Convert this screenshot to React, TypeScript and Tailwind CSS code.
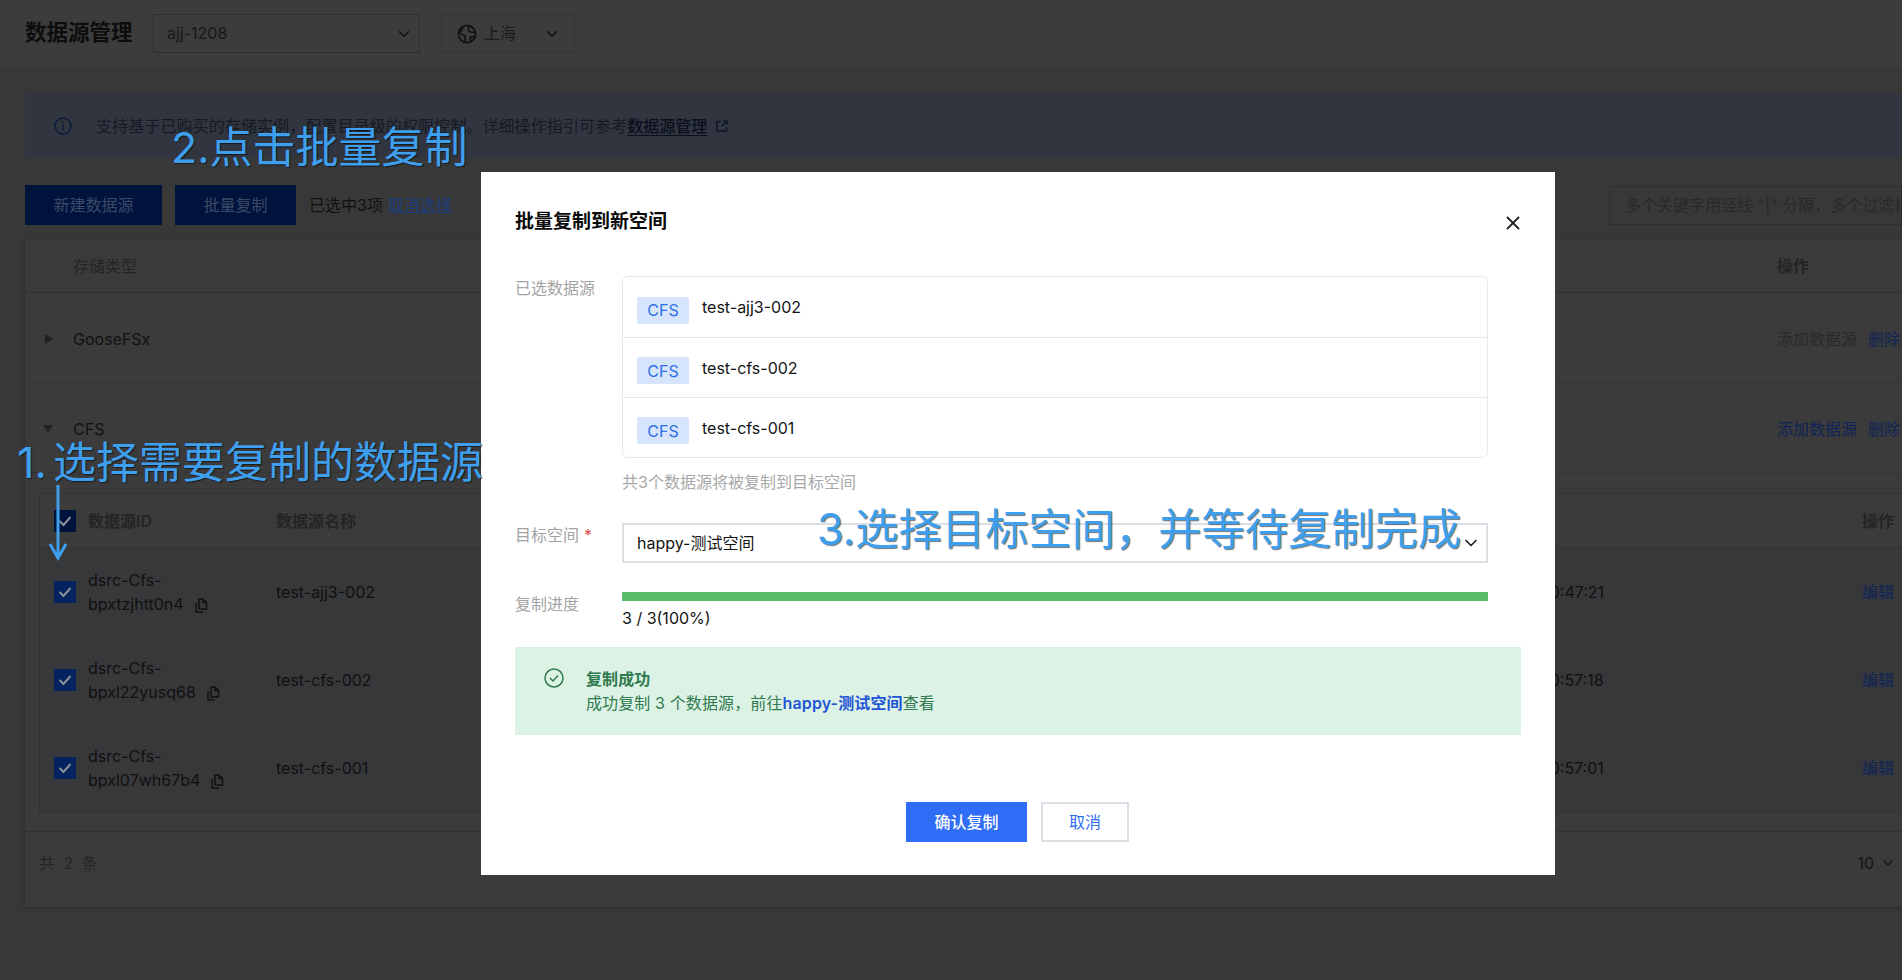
import type { ReactNode } from 'react';
import { ChevronDown, X } from 'lucide-react';

const selectedSources = ['test-ajj3-002', 'test-cfs-002', 'test-cfs-001'];

const sourceRows = [
	{ id: 'dsrc-Cfs-', suffix: 'bpxtzjhtt0n4', name: 'test-ajj3-002', time: '2024-12-08 10:47:21' },
	{ id: 'dsrc-Cfs-', suffix: 'bpxl22yusq68', name: 'test-cfs-002', time: '2024-12-08 10:57:18' },
	{ id: 'dsrc-Cfs-', suffix: 'bpxl07wh67b4', name: 'test-cfs-001', time: '2024-12-08 10:57:01' },
];

function CheckBox({ dark }: { dark?: boolean }) {
	return (
		<span className={`flex h-[22px] w-[22px] shrink-0 items-center justify-center ${dark ? 'bg-[#00133d]' : 'bg-[#05235f]'}`}>
			<svg width="14" height="12" viewBox="0 0 14 12" fill="none" stroke="#8b8f97" strokeWidth="2">
				<path d="M1.5 6 L5.5 10 L12.5 2" />
			</svg>
		</span>
	);
}

function CopyIcon() {
	return (
		<svg width="14" height="15" viewBox="0 0 14 15" fill="none" stroke="#101010" strokeWidth="1.5" className="ml-[10px] inline-block align-[-3px]">
			<path d="M5 1 H9 L12.5 4.5 V11 H5 Z" />
			<path d="M9 1 V4.5 H12.5" />
			<path d="M2 5 V14 H9" />
		</svg>
	);
}

function Annotation({ className, children }: { className: string; children: ReactNode }) {
	return (
		<div className={`absolute whitespace-nowrap font-normal leading-none text-[#3d9fed] [text-shadow:1px_1px_1px_rgba(0,0,0,0.55)] ${className}`}>
			{children}
		</div>
	);
}

function FormLabel({ children }: { children: ReactNode }) {
	return <div className="w-[107px] shrink-0 text-[16px] leading-6 text-[#a3a3a3]">{children}</div>;
}

function CopyModal() {
	return (
		<div className="absolute left-[481px] top-[172px] h-[703px] w-[1074px] bg-white pl-[34px] pr-[34px] pt-[37px]">
			<div className="text-[19px] font-semibold leading-[26px] text-[#0a0a0a]">批量复制到新空间</div>
			<X className="absolute left-[1021px] top-[40px] h-[22px] w-[22px] text-[#222222]" strokeWidth={2} />

			<div className="mt-[41px] flex">
				<FormLabel>已选数据源</FormLabel>
				<div className="w-[866px]">
					<div className="rounded-[6px] border border-[#e8e8ec]">
						{selectedSources.map((name, i) => (
							<div
								key={name}
								className={`flex h-[60px] items-center pl-[14px] ${i > 0 ? 'border-t border-[#e8e8ec]' : ''}`}
							>
								<span className="mt-[6px] flex h-[27px] w-[52px] items-center justify-center rounded-[2px] bg-[#d6e5fb] text-[16px] text-[#2f6fe8]">
									CFS
								</span>
								<span className="ml-[13px] text-[16px] text-[#141414]">{name}</span>
							</div>
						))}
					</div>
					<div className="mt-[12px] text-[16px] leading-6 text-[#a8a8a8]">共3个数据源将被复制到目标空间</div>
				</div>
			</div>

			<div className="mt-[29px] flex">
				<FormLabel>
					目标空间<span className="ml-[5px] text-[#d9534f]">*</span>
				</FormLabel>
				<div className="flex h-[40px] w-[866px] items-center justify-between border-2 border-[#dcdfe5] pl-[13px] pr-[5px] text-[16px] text-[#141414]">
					happy-测试空间
					<ChevronDown className="h-[20px] w-[20px] text-[#222222]" strokeWidth={2} />
				</div>
			</div>

			<div className="mt-[29px] flex">
				<FormLabel>复制进度</FormLabel>
				<div className="w-[866px]">
					<div className="h-[9px] w-full bg-[#5bbd6c]" />
					<div className="mt-[5px] text-[16px] leading-6 text-[#141414]">3 / 3(100%)</div>
				</div>
			</div>

			<div className="mt-[17px] flex h-[88px] bg-[#dcf2e5] pl-[29px] pt-[20px]">
				<svg width="20" height="20" viewBox="0 0 20 20" fill="none" stroke="#2f7a4e" strokeWidth="1.5" className="mt-px shrink-0">
					<circle cx="10" cy="10" r="9" />
					<path d="M6 10 L9 13 L14 7.5" />
				</svg>
				<div className="ml-[22px] text-[16px] leading-6 tracking-[0.12px] text-[#2f7a4e]">
					<div className="font-semibold">复制成功</div>
					<div>
						成功复制 3 个数据源，前往<span className="font-semibold text-[#1f56d6]">happy-测试空间</span>查看
					</div>
				</div>
			</div>

			<div className="mt-[67px] flex justify-center gap-[14px] pr-[1px]">
				<button className="h-[40px] w-[121px] bg-[#2f6df6] text-[16px] font-medium text-white">确认复制</button>
				<button className="h-[40px] w-[88px] border-2 border-[#dcdfe5] bg-white text-[16px] text-[#2f6df6]">取消</button>
			</div>
		</div>
	);
}

export default function App() {
	return (
		<div className="relative h-[980px] w-[1902px] overflow-hidden bg-[#383838] font-[Inter,'Noto_Sans_CJK_SC',sans-serif] text-[16px] text-[#101010]">
			{/* header */}
			<div className="flex h-[67px] items-center bg-[#3c3c3c] pl-[25px]">
				<div className="-mt-[2px] w-[128px] text-[21.5px] font-semibold text-[#0d0d0d]">数据源管理</div>
				<div className="flex h-[39px] w-[267px] items-center justify-between border border-[#2f2f2f] pl-[13px] pr-[6px]">
					<span className="-mt-[2px] text-[#171717]">ajj-1208</span>
					<ChevronDown className="h-[18px] w-[18px] text-[#111111]" strokeWidth={2} />
				</div>
				<div className="ml-[21px] flex h-[39px] w-[134px] items-center border border-[#343434] pl-[15px]">
					<svg width="20" height="20" viewBox="0 0 20 20" fill="none" stroke="#101010" strokeWidth="1.6" className="shrink-0">
						<circle cx="10" cy="10" r="8.6" />
						<path d="M5.5 3 C6 6 4.5 7 2 8 C4 10 5.5 11 8 12 C8.5 14 7.5 16 8 18.5" />
						<path d="M13 2 C11 4 10.5 6 12.5 7.5 C14.5 8.5 16.5 8 18.3 8.5" />
						<path d="M18 13 C15.5 12 13.5 12.5 13 14.5 C13 15.5 13.5 16.5 14 17.2" />
					</svg>
					<span className="-mt-[2px] ml-[7px] text-[#1c1c1c]">上海</span>
					<ChevronDown className="ml-[27px] h-[18px] w-[18px] text-[#111111]" strokeWidth={2} />
				</div>
			</div>

			<div className="pl-[25px] pt-[27px]">
				{/* notice */}
				<div className="flex h-[64px] items-center bg-[#30353f] pl-[29px]">
					<svg width="18" height="18" viewBox="0 0 18 18" fill="none" stroke="#0b1a3c" strokeWidth="1.4" className="shrink-0">
						<circle cx="9" cy="9" r="8" />
						<path d="M9 7.5 V13.5 M9 4.2 V6" />
					</svg>
					<span className="ml-[24px] tracking-[0.1px] text-[#151a24]">支持基于已购买的存储实例，配置目录级的权限控制。详细操作指引可参考</span>
					<span className="font-medium text-[#0a0f1c] underline underline-offset-[3px]">数据源管理</span>
					<svg width="12" height="12" viewBox="0 0 12 12" fill="none" stroke="#0d1526" strokeWidth="1.5" className="ml-[9px]">
						<path d="M5 1.5 H1 V11 H10.5 V7 M6 6 L11 1 M7.5 1 H11 V4.5" />
					</svg>
				</div>

				{/* toolbar */}
				<div className="mt-[27px] flex h-[40px] items-center">
					<button className="h-[40px] w-[137px] bg-[#00133d] text-[#3c4a68]">新建数据源</button>
					<button className="ml-[13px] h-[40px] w-[121px] bg-[#00133d] text-[#3c4a68]">批量复制</button>
					<span className="ml-[13px] text-[#111111]">已选中3项</span>
					<span className="ml-[5px] text-[#1d3f82] underline">取消选择</span>
					<div className="ml-auto flex h-[39px] w-[293px] items-center overflow-hidden whitespace-nowrap border border-[#2f2f2f] pl-[15px] text-[#292929]">
						多个关键字用竖线 "|" 分隔，多个过滤标签用回车键分隔
					</div>
				</div>

				{/* table card */}
				<div className="mt-[14px] h-[668px] bg-[#3b3b3b] shadow-[0_1px_4px_rgba(0,0,0,0.25)]">
					<div className="flex h-[54px] items-center border-b border-[#303030] pl-[48px]">
						<span className="text-[#242424]">存储类型</span>
						<span className="ml-auto w-[125px] font-semibold text-[#242424]">操作</span>
					</div>
					<div className="flex h-[90px] items-center border-b border-[#353535] pl-[20px] pt-[2px]">
						<span className="h-0 w-0 border-y-[5px] border-l-[8px] border-y-transparent border-l-[#222222]" />
						<span className="ml-[20px] text-[#121212]">GooseFSx</span>
						<span className="ml-auto w-[91px] text-[#2a2a2a]">添加数据源</span>
						<span className="w-[34px] text-[#0f2457]">删除</span>
					</div>
					<div className="flex h-[90px] items-center border-b border-[#353535] pl-[18px] pt-[2px]">
						<span className="h-0 w-0 border-x-[5px] border-t-[8px] border-x-transparent border-t-[#222222]" />
						<span className="ml-[20px] text-[#121212]">CFS</span>
						<span className="ml-auto w-[91px] text-[#0f2457]">添加数据源</span>
						<span className="w-[34px] text-[#0f2457]">删除</span>
					</div>

					{/* data sources of CFS */}
					<div className="ml-[14px] mt-[20px] border-b border-l border-t border-[#333333]">
						<div className="flex h-[54px] items-center border-b border-[#323232] pl-[14px]">
							<CheckBox dark />
							<span className="ml-[12px] w-[188px] font-semibold text-[#242424]">数据源ID</span>
							<span className="font-semibold text-[#242424]">数据源名称</span>
							<span className="ml-auto w-[40px] font-semibold text-[#242424]">操作</span>
						</div>
						{sourceRows.map((row) => (
							<div key={row.suffix} className="flex h-[88px] items-center border-b border-[#3a3b3d] bg-[#37383a] pl-[14px] last:border-b-0">
								<CheckBox />
								<div className="ml-[12px] w-[188px] leading-6 text-[#101010]">
									<div>{row.id}</div>
									<div>
										{row.suffix}
										<CopyIcon />
									</div>
								</div>
								<span className="w-[1172px] text-[#101010]">{row.name}</span>
								<span className="whitespace-nowrap text-[#101010]">{row.time}</span>
								<span className="ml-auto w-[40px] text-[#0f2457]">编辑</span>
							</div>
						))}
					</div>

					<div className="mt-[18px] flex h-[76px] items-center border-t border-[#323232] pb-[13px] pl-[14px] pr-[6px]">
						<span className="tracking-[2px] text-[#262626]">共 2 条</span>
						<span className="ml-auto text-[#141414]">10</span>
						<ChevronDown className="ml-[6px] h-[16px] w-[16px] text-[#141414]" strokeWidth={2} />
					</div>
				</div>
			</div>

			<CopyModal />

			{/* tutorial overlays */}
			<Annotation className="left-[171px] top-[126px] text-[43px]">2.点击批量复制</Annotation>
			<Annotation className="left-[17px] top-[441px] text-[43px]">
				<span className="mr-[6px]">1.</span>选择需要复制的数据源
			</Annotation>
			<Annotation className="left-[817px] top-[508px] text-[43.3px]">3.选择目标空间，并等待复制完成</Annotation>
			<svg width="20" height="76" viewBox="0 0 20 76" fill="none" stroke="#3d9fed" strokeWidth="3" className="absolute left-[48px] top-[485px]">
				<path d="M10 0 V73 M2 59 L10 73 L18 59" />
			</svg>
		</div>
	);
}
